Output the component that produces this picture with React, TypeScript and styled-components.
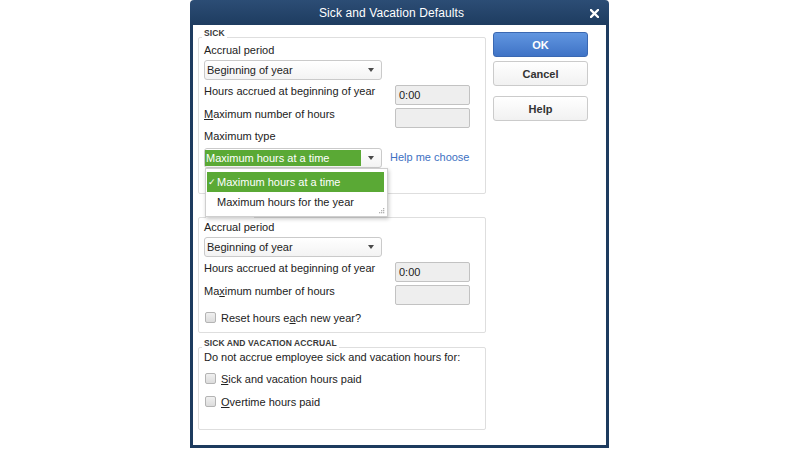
import React from 'react';
import styled, { createGlobalStyle } from 'styled-components';

const GlobalStyle = createGlobalStyle`
  html, body {
    margin: 0;
    padding: 0;
    background: #ffffff;
  }
  body {
    font-family: "Liberation Sans", Arial, sans-serif;
    font-size: 11px;
    color: #222222;
  }
`;

const Page = styled.div`
  width: 800px;
  height: 450px;
  box-sizing: border-box;
  padding-left: 190px;
  display: flex;
  align-items: flex-start;
`;

const Dialog = styled.div`
  width: 419px;
  height: 448px;
  box-sizing: border-box;
  padding: 0 3px 3px 3px;
  border-radius: 4px 4px 0 0;
  background: linear-gradient(180deg, #2c4d75 0px, #1e3c60 25px, #1d3b5e 100%);
  display: flex;
  flex-direction: column;
`;

const TitleBar = styled.div`
  height: 25px;
  display: flex;
  align-items: center;
  padding-right: 7px;
`;

const Title = styled.div`
  flex: 1;
  text-align: center;
  color: #ffffff;
  font-size: 12px;
  letter-spacing: 0.1px;
`;

const Close = styled.svg`
  width: 9px;
  height: 9px;
  margin-top: 1px;
`;

const Body = styled.div`
  flex: 1;
  background: #ffffff;
  display: flex;
  gap: 7px;
  padding: 3px 18px 0 5px;
`;

const Groups = styled.div`
  width: 288px;
  display: flex;
  flex-direction: column;
`;

const GroupTitle = styled.div<{ $mt?: number; $ml?: number }>`
  position: relative;
  z-index: 1;
  align-self: flex-start;
  margin: ${(p) => p.$mt ?? 0}px 0 -2px ${(p) => p.$ml ?? 4}px;
  padding: 0 2px;
  background: #ffffff;
  font-size: 8.5px;
  font-weight: bold;
  line-height: 11px;
  color: #3a3a3a;
  letter-spacing: 0.1px;
`;

const GroupBox = styled.div<{ $pt: number; $pb: number }>`
  border: 1px solid #dedede;
  border-radius: 2px;
  padding: ${(p) => p.$pt}px 15px ${(p) => p.$pb}px 5px;
  display: flex;
  flex-direction: column;
`;

const Label = styled.div<{ $mt?: number }>`
  line-height: 13px;
  margin-top: ${(p) => p.$mt ?? 0}px;
  white-space: nowrap;
`;

const FieldRow = styled.div<{ $mt: number }>`
  display: flex;
  justify-content: space-between;
  align-items: flex-start;
  margin-top: ${(p) => p.$mt}px;
  line-height: 13px;
`;

const TextBox = styled.div`
  width: 75px;
  height: 20px;
  box-sizing: border-box;
  border: 1px solid #c2c2c2;
  border-radius: 2px;
  background: #eeeeee;
  padding-left: 3px;
  display: flex;
  align-items: center;
`;

const SelectRow = styled.div<{ $mt: number }>`
  display: flex;
  align-items: center;
  margin-top: ${(p) => p.$mt}px;
`;

const SelectWrap = styled.div`
  position: relative;
`;

const Select = styled.div<{ $mt?: number }>`
  width: 178px;
  height: 20px;
  box-sizing: border-box;
  margin-top: ${(p) => p.$mt ?? 0}px;
  border: 1px solid #cacaca;
  border-radius: 3px;
  background: linear-gradient(180deg, #ffffff, #f3f3f3);
  display: flex;
  align-items: center;
`;

const SelectValue = styled.div<{ $active?: boolean }>`
  flex: 1;
  height: 16px;
  padding-left: ${(p) => (p.$active ? 1 : 2)}px;
  display: flex;
  align-items: center;
  background: ${(p) => (p.$active ? '#5aa935' : 'transparent')};
  color: ${(p) => (p.$active ? '#ffffff' : '#222222')};
  white-space: nowrap;
`;

const Arrow = styled.div`
  width: 20px;
  display: flex;
  justify-content: center;
  &::after {
    content: '';
    border-left: 3.5px solid transparent;
    border-right: 3.5px solid transparent;
    border-top: 4px solid #4a4a4a;
  }
`;

const HelpLink = styled.span`
  margin-left: 8px;
  color: #3d70c2;
  margin-top: -3px;
`;

const DropList = styled.div`
  position: absolute;
  top: 20px;
  left: 1px;
  width: 183px;
  height: 49px;
  box-sizing: border-box;
  padding: 3px 3px 0 1px;
  background: #ffffff;
  border: 1px solid #cfcfcf;
  box-shadow: 1px 2px 4px rgba(0, 0, 0, 0.22);
  z-index: 5;
`;

const DropItem = styled.div<{ $active?: boolean }>`
  height: 20px;
  display: flex;
  align-items: center;
  padding-left: 1px;
  background: ${(p) => (p.$active ? '#5aa935' : 'transparent')};
  color: ${(p) => (p.$active ? '#ffffff' : '#222222')};
  white-space: nowrap;
`;

const Check = styled.span`
  width: 9px;
  font-size: 9px;
  line-height: 10px;
`;

const Grip = styled.svg`
  position: absolute;
  right: 2px;
  bottom: 2px;
  width: 7px;
  height: 7px;
`;

const CheckRow = styled.div<{ $mt: number }>`
  display: flex;
  align-items: center;
  height: 13px;
  margin-top: ${(p) => p.$mt}px;
  padding-left: 1px;
  gap: 5px;
`;

const CheckBox = styled.span`
  width: 11px;
  height: 11px;
  box-sizing: border-box;
  border: 1px solid #b4b4b4;
  border-radius: 2px;
  background: linear-gradient(180deg, #f0f0f0, #dcdcdc);
`;

const Buttons = styled.div`
  width: 95px;
  display: flex;
  flex-direction: column;
  padding-top: 4px;
`;

const Button = styled.button<{ $primary?: boolean; $mt?: number }>`
  width: 95px;
  height: 25px;
  margin-top: ${(p) => p.$mt ?? 0}px;
  border-radius: 3px;
  font-family: "Liberation Sans", Arial, sans-serif;
  font-size: 11px;
  font-weight: bold;
  padding: 0;
  border: 1px solid ${(p) => (p.$primary ? '#3a68b2' : '#cbcbcb')};
  background: ${(p) =>
    p.$primary
      ? 'linear-gradient(180deg, #6196e0, #3f73c6)'
      : 'linear-gradient(180deg, #ffffff, #f1f1f1)'};
  color: ${(p) => (p.$primary ? '#ffffff' : '#333333')};
`;

const App: React.FC = () => {
  return (
    <Page>
      <GlobalStyle />
      <Dialog>
        <TitleBar>
          <Title>Sick and Vacation Defaults</Title>
          <Close viewBox="0 0 9 9">
            <path d="M1 1 L8 8 M8 1 L1 8" stroke="#ffffff" strokeWidth="2.3" strokeLinecap="square" />
          </Close>
        </TitleBar>
        <Body>
          <Groups>
            <GroupTitle>SICK</GroupTitle>
            <GroupBox $pt={6} $pb={25}>
              <Label>Accrual period</Label>
              <Select $mt={3}>
                <SelectValue>Beginning of year</SelectValue>
                <Arrow />
              </Select>
              <FieldRow $mt={5}>
                <span>Hours accrued at beginning of year</span>
                <TextBox>0:00</TextBox>
              </FieldRow>
              <FieldRow $mt={3}>
                <span><u>M</u>aximum number of hours</span>
                <TextBox />
              </FieldRow>
              <Label $mt={2}>Maximum type</Label>
              <SelectRow $mt={5}>
                <SelectWrap>
                  <Select>
                    <SelectValue $active>Maximum hours at a time</SelectValue>
                    <Arrow />
                  </Select>
                  <DropList>
                    <DropItem $active>
                      <Check>✓</Check>Maximum hours at a time
                    </DropItem>
                    <DropItem>
                      <Check />Maximum hours for the year
                    </DropItem>
                    <Grip viewBox="0 0 7 7">
                      <rect x="5" y="1" width="1.3" height="1.3" fill="#b0b0b0" />
                      <rect x="3" y="3" width="1.3" height="1.3" fill="#b0b0b0" />
                      <rect x="5" y="3" width="1.3" height="1.3" fill="#b0b0b0" />
                      <rect x="1" y="5" width="1.3" height="1.3" fill="#b0b0b0" />
                      <rect x="3" y="5" width="1.3" height="1.3" fill="#b0b0b0" />
                      <rect x="5" y="5" width="1.3" height="1.3" fill="#b0b0b0" />
                    </Grip>
                  </DropList>
                </SelectWrap>
                <HelpLink>Help me choose</HelpLink>
              </SelectRow>
            </GroupBox>

            <GroupTitle $mt={14} $ml={8}>VACATION</GroupTitle>
            <GroupBox $pt={3} $pb={8}>
              <Label>Accrual period</Label>
              <Select $mt={3}>
                <SelectValue>Beginning of year</SelectValue>
                <Arrow />
              </Select>
              <FieldRow $mt={5}>
                <span>Hours accrued at beginning of year</span>
                <TextBox>0:00</TextBox>
              </FieldRow>
              <FieldRow $mt={3}>
                <span>Ma<u>x</u>imum number of hours</span>
                <TextBox />
              </FieldRow>
              <CheckRow $mt={6}>
                <CheckBox />
                <span>Reset hours e<u>a</u>ch new year?</span>
              </CheckRow>
            </GroupBox>

            <GroupTitle $mt={5}>SICK AND VACATION ACCRUAL</GroupTitle>
            <GroupBox $pt={3} $pb={21}>
              <Label>Do not accrue employee sick and vacation hours for:</Label>
              <CheckRow $mt={8}>
                <CheckBox />
                <span><u>S</u>ick and vacation hours paid</span>
              </CheckRow>
              <CheckRow $mt={10}>
                <CheckBox />
                <span><u>O</u>vertime hours paid</span>
              </CheckRow>
            </GroupBox>
          </Groups>

          <Buttons>
            <Button $primary>OK</Button>
            <Button $mt={4}>Cancel</Button>
            <Button $mt={10}>Help</Button>
          </Buttons>
        </Body>
      </Dialog>
    </Page>
  );
};

export default App;
